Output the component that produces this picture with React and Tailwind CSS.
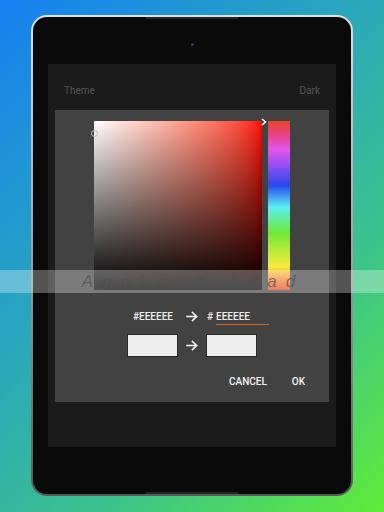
import React from "react";

function Arrow() {
  return (
    <svg className="block" width="12" height="11" viewBox="0 0 12 11" fill="none" stroke="#f2f2f2" strokeWidth="1.6" strokeLinecap="square">
      <path d="M1 5.5H10.5" />
      <path d="M6.5 1.5L10.5 5.5L6.5 9.5" />
    </svg>
  );
}

export default function App() {
  return (
    <div
      className="relative w-[384px] h-[512px] overflow-hidden bg-[linear-gradient(135deg,#1580f2_0%,#2aa7bb_40%,#3dc48a_70%,#60ec38_100%)] pt-[15px] pl-[31px]"
      style={{ fontFamily: "Roboto, 'Liberation Sans', sans-serif" }}
    >
      {/* device */}
      <div className="w-[322px] h-[481px] rounded-[16px] p-[2px] bg-[linear-gradient(to_bottom,#e0e0e0,#a0a0a0_50%,#5a5a5a)]">
        <div className="relative w-full h-full rounded-[14px] bg-[#0a0a0a] flex flex-col items-center">
          <div className="w-[94px] h-[2px] bg-[#262626] rounded-b-[2px]" />
          <div className="mt-[24px] w-[3px] h-[3px] rounded-full bg-[#3a3a6a]" />
          {/* screen */}
          <div className="mt-[18px] w-[288px] h-[383px] bg-[#1b1b1b] flex flex-col">
            <div className="flex justify-between px-[16px] pt-[21px] text-[10px] leading-[12px] text-[#545454]">
              <span>Theme</span>
              <span>Dark</span>
            </div>
            {/* dialog */}
            <div className="mx-[7px] mt-[13px] h-[292px] bg-[#424242] flex flex-col">
              <div className="flex pl-[39px] pt-[11px]">
                <div className="relative w-[168px] h-[169px] bg-linear-to-r from-white to-[#ff0000]">
                  <div className="absolute inset-0 bg-linear-to-t from-black to-transparent" />
                  <div className="absolute left-[-3.5px] top-[8.5px] w-[7px] h-[7px] rounded-full border border-[#bdbdbd]" />
                  <svg className="absolute right-[-5px] top-[-3px]" width="6" height="8" viewBox="0 0 6 8" fill="none" stroke="#ffffff" strokeWidth="1.5">
                    <path d="M1 1L4.5 4L1 7" />
                  </svg>
                </div>
                <div className="ml-[6px] w-[22px] h-[169px] bg-[linear-gradient(to_bottom,#e8482a_0%,#e8407a_7%,#e455f0_17%,#2a48f0_38%,#5aeef4_51%,#6ee838_66%,#f8ea3c_86%,#f07a30_95%,#e8482a_100%)]" />
              </div>
              {/* hex row */}
              <div className="flex items-center pl-[78px] mt-[18px] text-[10px] leading-[12px] font-medium text-[#ececec]">
                <span className="w-[40px]">#EEEEEE</span>
                <span className="ml-[13px]"><Arrow /></span>
                <span className="ml-[9px]">#</span>
                <span className="ml-[3px] w-[53px] border-b border-[#d0691c] pb-[1px] mt-[3px]">EEEEEE</span>
              </div>
              {/* swatches */}
              <div className="flex items-center pl-[72px] mt-[9px]">
                <div className="w-[51px] h-[23px] bg-[#eeeeee] border border-[#2a2a2a]" />
                <span className="ml-[8px]"><Arrow /></span>
                <div className="ml-[8px] w-[51px] h-[23px] bg-[#eeeeee] border border-[#2a2a2a]" />
              </div>
              {/* buttons */}
              <div className="flex pl-[174px] mt-[19px] text-[10px] leading-[12px] font-medium text-[#f4f4f4]">
                <span>CANCEL</span>
                <span className="ml-[25px]">OK</span>
              </div>
            </div>
          </div>
          <div className="absolute bottom-0 w-[94px] h-[2px] bg-[#262626] rounded-t-[2px]" />
        </div>
      </div>

      {/* watermark band */}
      <div className="absolute left-0 right-0 top-[270px] h-[23px] bg-[rgba(255,255,255,0.3)] flex items-center justify-center">
        <span
          className="italic text-[17px] leading-[20px] tracking-[9px] text-[rgba(80,80,80,0.7)] pl-[2px]"
          style={{ fontFamily: "'Liberation Sans', sans-serif" }}
        >
          AppLaunchpad
        </span>
      </div>
    </div>
  );
}
